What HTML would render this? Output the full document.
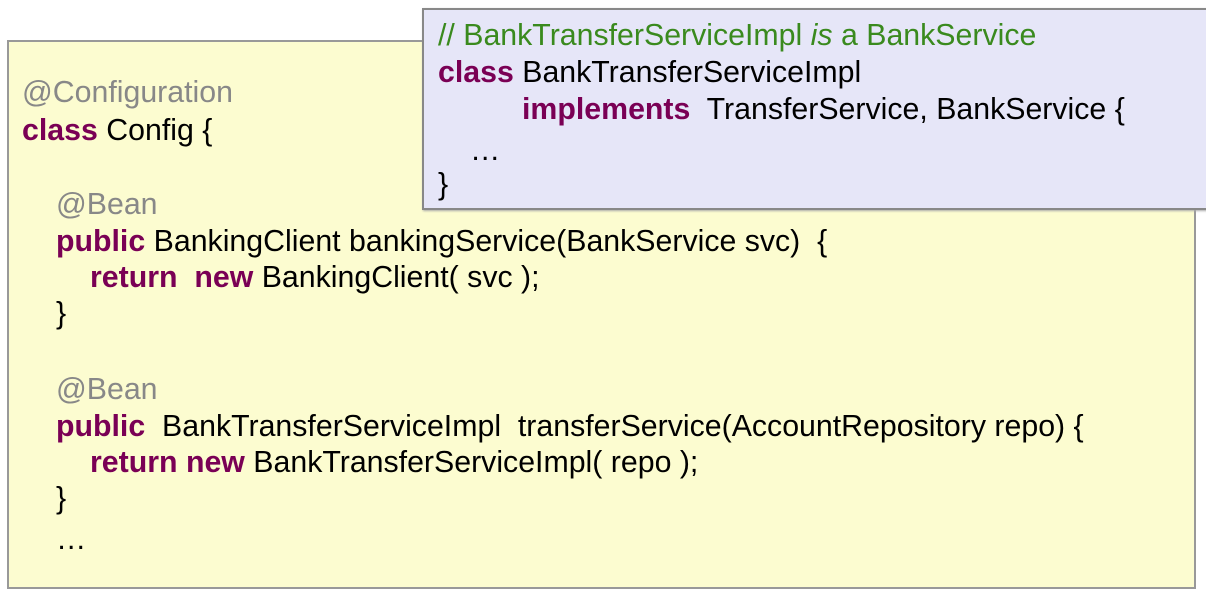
<!DOCTYPE html>
<html><head><style>
body{margin:0;width:1206px;height:596px;background:#fff;position:relative;overflow:hidden;font-family:"Liberation Sans",Arial,sans-serif;font-size:30.3px;color:#000}
.y{position:absolute;left:7px;top:40px;width:1185px;height:545px;background:#fcfcd0;border:2px solid #999}
.b{position:absolute;left:422px;top:8px;width:782px;height:198px;background:#e6e6f8;border:2px solid #888;box-shadow:1px 1px 2px #aaa}
.l{position:absolute;white-space:pre;line-height:30px}
.k{color:#7a0055;font-weight:bold}
.a{color:#888}
.c{color:#3a8a1e}
</style></head><body>
<div class="y"></div>
<div class="l a" style="left:22px;top:78px">@Configuration</div>
<div class="l" style="left:22px;top:116px"><span class="k">class</span> Config {</div>
<div class="l a" style="left:56px;top:190px">@Bean</div>
<div class="l" style="left:56px;top:227px"><span class="k">public</span> BankingClient bankingService(BankService svc)  {</div>
<div class="l" style="left:90px;top:263px"><span class="k">return  new</span> BankingClient( svc );</div>
<div class="l" style="left:56px;top:299px">}</div>
<div class="l a" style="left:56px;top:375px">@Bean</div>
<div class="l" style="left:56px;top:412px"><span class="k">public</span>  BankTransferServiceImpl  transferService(AccountRepository repo) {</div>
<div class="l" style="left:90px;top:448px"><span class="k">return new</span> BankTransferServiceImpl( repo );</div>
<div class="l" style="left:56px;top:484px">}</div>
<div class="l" style="left:56px;top:525px">…</div>
<div class="b"></div>
<div class="l c" style="left:438px;top:21px">// BankTransferServiceImpl <i>is</i> a BankService</div>
<div class="l" style="left:438px;top:58px"><span class="k">class</span> BankTransferServiceImpl</div>
<div class="l" style="left:522px;top:95px"><span class="k">implements</span>  TransferService, BankService {</div>
<div class="l" style="left:470px;top:136px">…</div>
<div class="l" style="left:438px;top:170px">}</div>
</body></html>
